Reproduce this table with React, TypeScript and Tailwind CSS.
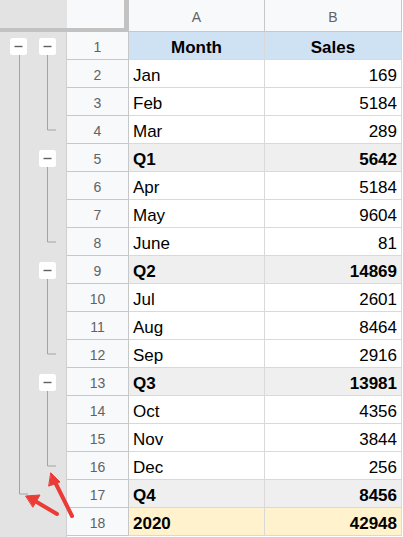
import React from "react";

type Row = { n: number; a: string; b: string; kind: "head" | "data" | "sub" | "total" };

const rows: Row[] = [
  { n: 1, a: "Month", b: "Sales", kind: "head" },
  { n: 2, a: "Jan", b: "169", kind: "data" },
  { n: 3, a: "Feb", b: "5184", kind: "data" },
  { n: 4, a: "Mar", b: "289", kind: "data" },
  { n: 5, a: "Q1", b: "5642", kind: "sub" },
  { n: 6, a: "Apr", b: "5184", kind: "data" },
  { n: 7, a: "May", b: "9604", kind: "data" },
  { n: 8, a: "June", b: "81", kind: "data" },
  { n: 9, a: "Q2", b: "14869", kind: "sub" },
  { n: 10, a: "Jul", b: "2601", kind: "data" },
  { n: 11, a: "Aug", b: "8464", kind: "data" },
  { n: 12, a: "Sep", b: "2916", kind: "data" },
  { n: 13, a: "Q3", b: "13981", kind: "sub" },
  { n: 14, a: "Oct", b: "4356", kind: "data" },
  { n: 15, a: "Nov", b: "3844", kind: "data" },
  { n: 16, a: "Dec", b: "256", kind: "data" },
  { n: 17, a: "Q4", b: "8456", kind: "sub" },
  { n: 18, a: "2020", b: "42948", kind: "total" },
];

function GroupButton({ x, y }: { x: number; y: number }) {
  return (
    <g>
      <rect x={x} y={y} width={17} height={17} rx={2.5} fill="#ffffff" />
      <line x1={x + 4.5} x2={x + 12.5} y1={y + 8.5} y2={y + 8.5} stroke="#606060" strokeWidth={1.4} />
    </g>
  );
}

function Outline() {
  const mid = (r: number) => (r - 1) * 28 + 14;
  const top = (r: number) => (r - 1) * 28;
  const l2 = [1, 5, 9, 13];
  return (
    <svg width={67} height={505} className="block">
      <path d={`M19.5 ${top(1) + 23} V${mid(17)} H28`} fill="none" stroke="#a3a3a3" strokeWidth={1} />
      <GroupButton x={10} y={top(1) + 6} />
      {l2.map((r) => (
        <g key={r}>
          <path d={`M47.5 ${top(r) + 23} V${mid(r + 3)} H56`} fill="none" stroke="#a3a3a3" strokeWidth={1} />
          <GroupButton x={39} y={top(r) + 6} />
        </g>
      ))}
    </svg>
  );
}

export default function App() {
  return (
    <div className="relative w-[403px] h-[537px] overflow-hidden bg-white font-['Liberation_Sans',Arial,sans-serif]">
      {/* header row */}
      <div className="flex h-[32px]">
        <div className="w-[67px] bg-[#e3e3e3] border-b-4 border-[#c2c2c2]" />
        <div className="w-[62px] bg-[#f8f9fa] border-b-4 border-r-[5px] border-[#c2c2c2]" />
        <div className="w-[136px] bg-[#f8f9fa] border-r border-b border-[#c7c7c7] flex items-center justify-center pt-[4px] text-[14px] text-[#5f6368]">
          A
        </div>
        <div className="w-[137px] bg-[#f8f9fa] border-r border-b border-[#c7c7c7] flex items-center justify-center pt-[4px] text-[14px] text-[#5f6368]">
          B
        </div>
      </div>
      {/* body */}
      <div className="flex">
        <div className="w-[67px] bg-[#e3e3e3] border-r border-[#d0d0d0]">
          <Outline />
        </div>
        <div className="flex flex-col">
          {rows.map((r) => {
            const bg =
              r.kind === "head"
                ? "bg-[#cfe2f3]"
                : r.kind === "sub"
                ? "bg-[#efefef]"
                : r.kind === "total"
                ? "bg-[#fff2cc]"
                : "bg-white";
            const bold = r.kind !== "data" ? "font-bold" : "";
            return (
              <div key={r.n} className="flex h-[28px]">
                <div className="w-[62px] bg-[#f8f9fa] border-r border-b border-[#c7c7c7] flex items-center justify-center pt-[4px] text-[14px] text-[#5f6368]">
                  {r.n}
                </div>
                <div
                  className={`w-[136px] ${bg} border-r border-b border-[#d9d9d9] flex items-center pt-[4px] text-[17px] text-black ${bold} ${
                    r.kind === "head" ? "justify-center" : "pl-[4px]"
                  }`}
                >
                  {r.a}
                </div>
                <div
                  className={`w-[137px] ${bg} border-r border-b border-[#d9d9d9] flex items-center pt-[4px] text-[17px] text-black ${bold} ${
                    r.kind === "head" ? "justify-center" : "justify-end pr-[4px]"
                  }`}
                >
                  {r.b}
                </div>
              </div>
            );
          })}
        </div>
      </div>
      {/* annotation arrows */}
      <svg className="absolute left-0 top-0 pointer-events-none" width={403} height={537}>
        <g stroke="#ea3b36" strokeWidth={4} strokeLinecap="round" fill="#ea3b36">
          <line x1={57} y1={514} x2={35} y2={501} />
          <polygon points="26,496 40,495 33,507" strokeWidth={1} strokeLinejoin="round" />
          <line x1={72} y1={516} x2={56} y2={484} />
          <polygon points="51,473 60,482 49,486" strokeWidth={1} strokeLinejoin="round" />
        </g>
      </svg>
    </div>
  );
}
